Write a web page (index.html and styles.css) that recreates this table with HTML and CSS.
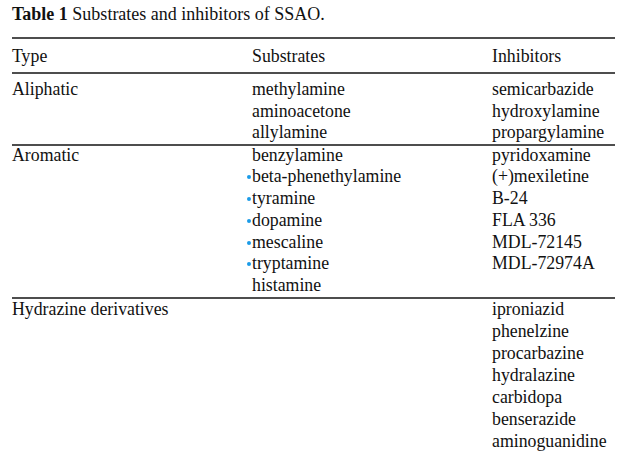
FILE: index.html
```html
<!DOCTYPE html>
<html>
<head>
<meta charset="utf-8">
<link rel="stylesheet" href="styles.css">
</head>
<body>
<div class="page">
  <p class="caption"><b>Table 1</b> Substrates and inhibitors of SSAO.</p>
  <div class="tbl">
    <div class="row head">
      <div class="col c1"><div class="ln">Type</div></div>
      <div class="col c2"><div class="ln">Substrates</div></div>
      <div class="col c3"><div class="ln">Inhibitors</div></div>
    </div>
    <div class="row grp first">
      <div class="col c1"><div class="ln">Aliphatic</div></div>
      <div class="col c2">
        <div class="ln">methylamine</div>
        <div class="ln">aminoacetone</div>
        <div class="ln">allylamine</div>
      </div>
      <div class="col c3">
        <div class="ln">semicarbazide</div>
        <div class="ln">hydroxylamine</div>
        <div class="ln">propargylamine</div>
      </div>
    </div>
    <div class="row grp mid">
      <div class="col c1"><div class="ln">Aromatic</div></div>
      <div class="col c2">
        <div class="ln">benzylamine</div>
        <div class="ln"><span class="dot"></span>beta-phenethylamine</div>
        <div class="ln"><span class="dot"></span>tyramine</div>
        <div class="ln"><span class="dot"></span>dopamine</div>
        <div class="ln"><span class="dot"></span>mescaline</div>
        <div class="ln"><span class="dot"></span>tryptamine</div>
        <div class="ln">histamine</div>
      </div>
      <div class="col c3">
        <div class="ln">pyridoxamine</div>
        <div class="ln">(+)mexiletine</div>
        <div class="ln">B-24</div>
        <div class="ln">FLA 336</div>
        <div class="ln">MDL-72145</div>
        <div class="ln">MDL-72974A</div>
      </div>
    </div>
    <div class="row grp last">
      <div class="col c1"><div class="ln">Hydrazine derivatives</div></div>
      <div class="col c2"></div>
      <div class="col c3">
        <div class="ln">iproniazid</div>
        <div class="ln">phenelzine</div>
        <div class="ln">procarbazine</div>
        <div class="ln">hydralazine</div>
        <div class="ln">carbidopa</div>
        <div class="ln">benserazide</div>
        <div class="ln">aminoguanidine</div>
      </div>
    </div>
  </div>
</div>
</body>
</html>
```

FILE: styles.css
```css
html, body {
  margin: 0;
  padding: 0;
  background: #ffffff;
}
.page {
  padding: 3px 5px 0 12px;
  font-family: "Liberation Serif", "Times New Roman", serif;
  color: #111;
}
.caption {
  margin: 0;
  font-size: 18px;
  line-height: 22px;
}
.caption b {
  font-weight: bold;
}
.tbl {
  margin-top: 12px;
  width: 603px;
  font-size: 17.8px;
  border-top: 2px solid #4e4e4e;
}
.row {
  display: flex;
}
.col {
  display: flex;
  flex-direction: column;
}
.c1, .c2 { width: 240px; }
.c3 { flex: 1; }
.ln {
  line-height: 22px;
  height: 22px;
  white-space: nowrap;
}
.head {
  padding-top: 6px;
  padding-bottom: 5px;
  border-bottom: 2px solid #4e4e4e;
}
.grp.first {
  padding-top: 5px;
}
.grp.first .ln {
  height: 21.5px;
  line-height: 21.5px;
}
.grp.mid {
  border-top: 2px solid #4e4e4e;
  border-bottom: 2px solid #4e4e4e;
}
.grp.mid .col {
  margin-top: -1px;
}
.grp.mid .ln {
  height: 21.8px;
  line-height: 21.8px;
}
.grp.last .col {
  margin-top: -1px;
}
.dot {
  display: inline-block;
  width: 4px;
  height: 4px;
  border-radius: 50%;
  background: #1a9be8;
  margin-left: -5px;
  margin-right: 1px;
  vertical-align: 3px;
}
```
